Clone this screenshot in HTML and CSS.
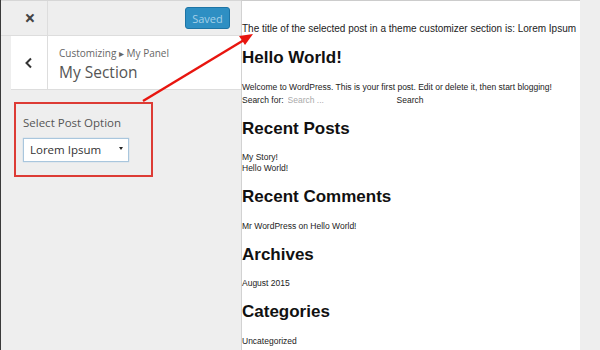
FILE: index.html
```html
<!DOCTYPE html>
<html lang="en">
<head>
    <meta charset="UTF-8">
    <title>Customizer - My Section</title>
    <link rel="stylesheet" href="styles.css">
</head>
<body>
    <div class="screen">
        <div class="panel">
            <div class="panel-header">
                <div class="close">&times;</div>
                <button class="saved" disabled>Saved</button>
            </div>
            <div class="section-title">
                <div class="back">
                    <svg width="10" height="12" viewBox="0 0 10 12"><path d="M7 1.5 L2.5 6 L7 10.5" fill="none" stroke="#333" stroke-width="2"/></svg>
                </div>
                <div class="section-name">
                    <span class="crumb">Customizing &#9656; My Panel</span>
                    <h3>My Section</h3>
                </div>
            </div>
            <div class="control highlight">
                <label for="postOption">Select Post Option</label>
                <div class="select-wrap">
                    <select id="postOption">
                        <option>Lorem Ipsum</option>
                    </select>
                </div>
            </div>
        </div>

        <div class="preview">
            <p class="lead">The title of the selected post in a theme customizer section is: Lorem Ipsum</p>
            <h2>Hello World!</h2>
            <p>Welcome to WordPress. This is your first post. Edit or delete it, then start blogging!</p>
            <form class="search">
                <span>Search for:</span>
                <input type="text" placeholder="Search ...">
                <button type="button">Search</button>
            </form>
            <h2>Recent Posts</h2>
            <p>My Story!</p>
            <p>Hello World!</p>
            <h2>Recent Comments</h2>
            <p>Mr WordPress on Hello World!</p>
            <h2>Archives</h2>
            <p>August 2015</p>
            <h2>Categories</h2>
            <p>Uncategorized</p>
        </div>
        <div class="gutter"></div>

        <!-- annotation arrow drawn over the screenshot -->
        <svg class="arrow" width="600" height="350" viewBox="0 0 600 350">
            <line x1="143" y1="101" x2="244" y2="40" stroke="#e8150f" stroke-width="2.5"/>
            <polygon points="253,34 239,36 245,45" fill="#e8150f"/>
        </svg>
    </div>
</body>
</html>
```

FILE: styles.css
```css
body {
    margin: 0;
    background-color: #eeeeee;
}
.screen {
    position: relative;
    display: flex;
    width: 600px;
    height: 350px;
    overflow: hidden;
}
.panel {
    width: 240px;
    border-left: 1px solid #3a3a3a;
    background-color: #eeeeee;
    font-family: "Open Sans", sans-serif;
    color: #555;
}
.panel-header {
    display: flex;
    justify-content: space-between;
    align-items: center;
    box-sizing: border-box;
    height: 36px;
    border-top: 1px solid #d6d6d6;
    border-bottom: 1px solid #dddddd;
}
.close {
    box-sizing: border-box;
    width: 47px;
    height: 35px;
    padding-left: 12px;
    line-height: 34px;
    text-align: center;
    font-size: 19px;
    font-weight: bold;
    color: #444;
    border-right: 1px solid #dddddd;
}
.saved {
    margin-right: 11px;
    width: 45px;
    height: 22px;
    padding: 0;
    background-color: #2e8fc3;
    border: 1px solid #1d74a5;
    border-radius: 3px;
    color: #a4cfe8;
    font-family: "Open Sans", sans-serif;
    font-size: 11px;
}
.section-title {
    display: flex;
    margin-left: 10px;
    height: 53px;
    background-color: #fff;
    border-bottom: 1px solid #dddddd;
}
.back {
    width: 36px;
    display: flex;
    align-items: center;
    justify-content: center;
    border-right: 1px solid #dddddd;
}
.section-name {
    padding: 10px 0 0 11px;
}
.crumb {
    display: block;
    font-size: 10px;
    line-height: 15px;
    color: #666;
}
.section-name h3 {
    margin: 0;
    font-size: 15.5px;
    font-weight: normal;
    line-height: 22px;
    color: #555;
}
.control {
    margin: 12px 0 0 13px;
    width: 128px;
    height: 60px;
    padding: 11px 0 0 7px;
}
.highlight {
    border: 2px solid #dd3b35;
}
.control label {
    display: block;
    font-size: 11.5px;
    line-height: 16px;
    margin-bottom: 6px;
}
.select-wrap {
    position: relative;
    width: 106px;
}
.select-wrap::after {
    content: "";
    position: absolute;
    right: 6px;
    top: 10px;
    border-left: 2px solid transparent;
    border-right: 2px solid transparent;
    border-top: 3px solid #222;
}
.control select {
    appearance: none;
    -webkit-appearance: none;
    width: 106px;
    height: 24px;
    padding: 0 0 0 6px;
    font-family: "Open Sans", sans-serif;
    font-size: 11.5px;
    color: #333;
    background-color: #fff;
    border: 1px solid #a9c6dd;
    border-radius: 0;
    box-shadow: 0 0 1px #9fc2de;
}
.preview {
    width: 338px;
    border-left: 1px solid #d2d2d2;
    border-top: 1px solid #cccccc;
    background-color: #fff;
    font-family: "Liberation Sans", Arial, sans-serif;
    color: #222;
    padding-top: 22px;
}
.preview p {
    margin: 0;
    font-size: 8.5px;
    line-height: 11px;
}
.preview .lead {
    font-size: 10px;
    line-height: 12px;
}
.preview h2 {
    margin: 13px 0 13.5px;
    font-size: 17px;
    line-height: 20px;
    color: #111;
}
.search {
    display: flex;
    margin-top: 1px;
    font-size: 8.5px;
    line-height: 12px;
}
.search input {
    width: 109px;
    margin: 0 0 0 4px;
    padding: 0;
    border: none;
    font-family: "Liberation Sans", Arial, sans-serif;
    font-size: 8.5px;
}
.search input::placeholder {
    color: #aaa;
}
.search button {
    margin: 0;
    padding: 0;
    border: none;
    background: none;
    font-family: "Liberation Sans", Arial, sans-serif;
    font-size: 8.5px;
    color: #222;
}
.gutter {
    flex: 1;
    background-color: #eeeeee;
}
.arrow {
    position: absolute;
    left: 0;
    top: 0;
}
```
